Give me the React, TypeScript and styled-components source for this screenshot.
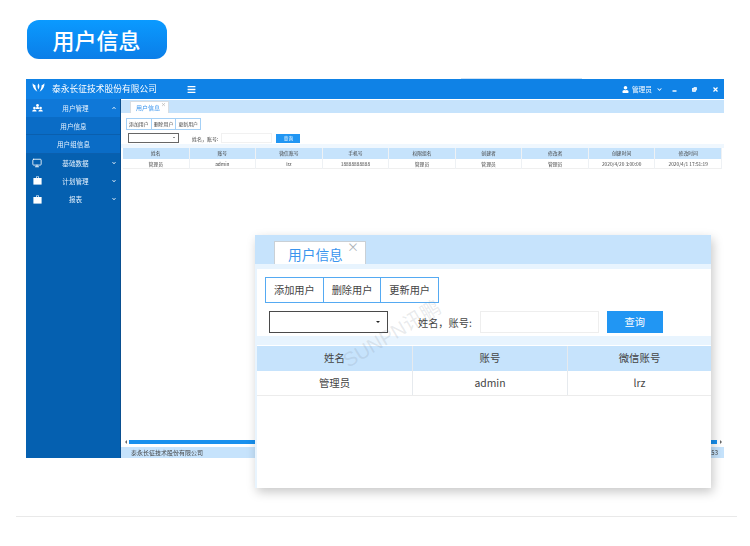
import React from "react";
import styled, { createGlobalStyle } from "styled-components";
import { FaBars, FaChevronDown, FaChevronUp, FaUser } from "react-icons/fa";
import { Monitor } from "lucide-react";

const GlobalStyle = createGlobalStyle`
  html, body {
    margin: 0;
    padding: 0;
    background: #fff;
    font-family: "Noto Sans CJK SC", "Noto Sans", sans-serif;
  }
  * {
    box-sizing: border-box;
  }
`;

const Page = styled.div`
  width: 750px;
  height: 546px;
  overflow: hidden;
  display: flex;
  flex-direction: column;
  padding-top: 20px;
`;

const SectionPill = styled.div`
  width: 140px;
  height: 39px;
  margin-left: 27px;
  border-radius: 12px;
  background: linear-gradient(180deg, #0a9aff 0%, #0b7ee8 100%);
  color: #fff;
  font-size: 22px;
  font-weight: 500;
  line-height: 38px;
  text-align: center;
  text-indent: -1px;
`;

const AppShot = styled.div`
  position: relative;
  width: 698px;
  height: 379px;
  margin: 20px 0 0 26px;
  display: flex;
  flex-direction: column;
`;

const Notch = styled.div`
  position: absolute;
  left: 435px;
  top: -1px;
  width: 121px;
  height: 1px;
  background: #cfe2f5;
`;

const TopBar = styled.header`
  height: 20px;
  flex: none;
  background: #0f82e6;
  color: #fff;
  display: flex;
  align-items: center;
  padding: 0 6px 0 5px;
  filter: blur(0.25px);
`;

const LogoBox = styled.div`
  width: 15px;
  display: flex;
  justify-content: center;
  margin-bottom: 3px;
`;

const AppTitle = styled.div`
  font-size: 8.75px;
  line-height: 20px;
  margin-left: 6px;
  width: 135px;
  white-space: nowrap;
`;

const UserArea = styled.div`
  margin-left: auto;
  display: flex;
  align-items: center;
  font-size: 6.7px;
`;

const UserName = styled.span`
  margin: 0 5px 0 3px;
`;

const WinButton = styled.div<{ $gap: number }>`
  margin-left: ${(p) => p.$gap}px;
  width: 6px;
  display: flex;
  justify-content: center;
`;

const Columns = styled.div`
  flex: 1;
  min-height: 0;
  display: flex;
  filter: blur(0.25px);
`;

const Sidebar = styled.nav`
  width: 95px;
  flex: none;
  background: #0560b0;
  border-right: 1px solid #0a4f90;
`;

const MenuItem = styled.div<{ $tone: "open" | "sub" | "closed" }>`
  height: 18.2px;
  display: grid;
  grid-template-columns: 22px 1fr 12px;
  align-items: center;
  color: #e4f1fd;
  font-size: 6.6px;
  background: ${(p) =>
    p.$tone === "open" ? "#0f78d8" : p.$tone === "sub" ? "#0a6cc6" : "transparent"};
  border-bottom: ${(p) => (p.$tone === "sub" ? "1px solid #0a5fae" : "none")};
`;

const MenuIcon = styled.div`
  display: flex;
  justify-content: center;
`;

const MenuText = styled.div<{ $sub: boolean }>`
  text-align: center;
  padding-right: ${(p) => (p.$sub ? 9 : 5)}px;
`;

const Main = styled.main`
  flex: 1;
  min-width: 0;
  display: flex;
  flex-direction: column;
  background: #fff;
  padding-top: 1px;
`;

const MiniTabStrip = styled.div`
  height: 13px;
  flex: none;
  background: #c6e3fc;
  padding: 1px 0 0 9px;
`;

const MiniTab = styled.div`
  position: relative;
  width: 39px;
  height: 12px;
  background: #fff;
  border: 1px solid #d8dde2;
  border-bottom: none;
  color: #3a95ee;
  font-size: 6px;
  line-height: 11px;
  padding-left: 5px;
`;

const MiniClose = styled.span`
  position: absolute;
  right: 2px;
  top: -1px;
  font-size: 5px;
  line-height: 6px;
  color: #999;
`;

const MiniButtons = styled.div`
  display: flex;
  width: 75px;
  height: 12px;
  margin: 5px 0 0 5px;
  border: 1px solid #a4d0f6;
`;

const MiniButton = styled.div`
  flex: 1;
  color: #444;
  font-size: 4.9px;
  line-height: 10px;
  text-align: center;
  & + & {
    border-left: 1px solid #a4d0f6;
  }
`;

const MiniFilter = styled.div`
  display: flex;
  align-items: center;
  height: 10px;
  margin: 3px 0 0 7px;
`;

const MiniSelect = styled.div`
  position: relative;
  width: 51px;
  height: 10px;
  border: 1px solid #666;
`;

const SelectArrow = styled.span<{ $size: number; $right: number }>`
  position: absolute;
  top: 50%;
  right: ${(p) => p.$right}px;
  margin-top: -${(p) => p.$size / 2}px;
  border-style: solid;
  border-width: ${(p) => p.$size}px ${(p) => p.$size}px 0;
  border-color: #222 transparent transparent;
`;

const MiniLabel = styled.div`
  margin-left: 13px;
  font-size: 5px;
  color: #444;
  white-space: nowrap;
`;

const MiniInput = styled.div`
  width: 51px;
  height: 10px;
  margin-left: 3px;
  border: 1px solid #f1f1f1;
`;

const MiniQuery = styled.div`
  width: 24px;
  height: 9px;
  margin-left: 4px;
  background: #2196f3;
  color: #fff;
  font-size: 4.6px;
  line-height: 9px;
  text-align: center;
`;

const MiniBand = styled.div`
  height: 4px;
  flex: none;
  margin-top: 1px;
  background: #eff7fe;
`;

const MiniTable = styled.div`
  margin: 0 2px;
  flex: none;
`;

const MiniRow = styled.div<{ $head?: boolean }>`
  display: grid;
  grid-template-columns: repeat(9, 1fr);
  height: ${(p) => (p.$head ? 11 : 10)}px;
  background: ${(p) => (p.$head ? "#c6e3fc" : "#fff")};
  border-bottom: ${(p) => (p.$head ? "none" : "1px solid #efefef")};
`;

const MiniCell = styled.div`
  font-size: 4.8px;
  line-height: 10px;
  color: #444;
  text-align: center;
  white-space: nowrap;
  border-right: 1px solid #eef1f4;
`;

const Scrollbar = styled.div`
  margin-top: auto;
  height: 6px;
  flex: none;
  display: flex;
  align-items: center;
  padding: 0 2px 0 4px;
`;

const ScrollThumb = styled.div`
  flex: 1;
  height: 4px;
  margin: 0 3px 0 2px;
  background: #1890ee;
`;

const ScrollArrow = styled.span<{ $right?: boolean }>`
  border-style: solid;
  border-width: 2px 0 2px 2px;
  border-color: transparent transparent transparent #666;
  transform: ${(p) => (p.$right ? "none" : "rotate(180deg)")};
`;

const StatusBar = styled.footer`
  height: 11px;
  flex: none;
  margin-top: 2px;
  background: #c6e3fc;
  color: #444;
  font-size: 6px;
  line-height: 11px;
  display: flex;
  justify-content: space-between;
  padding: 0 6px 0 10px;
`;

const ZoomCard = styled.section`
  position: absolute;
  left: 229px;
  top: 156px;
  width: 456px;
  height: 253px;
  background: #fff;
  border-left: 2px solid #e8f4fe;
  box-shadow: 2px 4px 10px rgba(0, 0, 0, 0.22);
  display: flex;
  flex-direction: column;
`;

const ZoomTabStrip = styled.div`
  height: 29px;
  flex: none;
  margin-left: -2px;
  background: #c6e3fc;
  padding: 6px 0 0 19px;
`;

const ZoomTab = styled.div`
  position: relative;
  width: 92px;
  height: 23px;
  background: #fff;
  border: 1px solid #c9d0d6;
  border-bottom: none;
  color: #3a95ee;
  font-size: 13.7px;
  line-height: 24px;
  padding-left: 13px;
`;

const ZoomClose = styled.span`
  position: absolute;
  right: 6px;
  top: -2px;
  font-size: 12px;
  line-height: 14px;
  color: #aab1b8;
`;

const ZoomBand = styled.div<{ $h: number }>`
  height: ${(p) => p.$h}px;
  flex: none;
  background: #e8f4fe;
`;

const ZoomButtons = styled.div`
  display: flex;
  width: 174px;
  height: 26px;
  margin: 8px 0 0 8px;
  border: 1.5px solid #55aaf2;
`;

const ZoomButton = styled.div`
  flex: 1;
  color: #444;
  font-size: 10.2px;
  line-height: 23px;
  text-align: center;
  & + & {
    border-left: 1.5px solid #55aaf2;
  }
`;

const ZoomFilter = styled.div`
  display: flex;
  align-items: center;
  height: 22px;
  margin: 8px 0 3px 12px;
`;

const ZoomSelect = styled.div`
  position: relative;
  width: 119px;
  height: 22px;
  border: 1.5px solid #4a4a4a;
`;

const ZoomLabel = styled.div`
  margin-left: 30px;
  font-size: 10.2px;
  color: #444;
  white-space: nowrap;
`;

const ZoomInput = styled.div`
  width: 119px;
  height: 22px;
  margin-left: 8px;
  border: 1px solid #eee;
`;

const ZoomQuery = styled.div`
  width: 56px;
  height: 22px;
  margin-left: 8px;
  background: #2196f3;
  color: #fff;
  font-size: 10.2px;
  line-height: 22px;
  text-align: center;
`;

const ZoomRow = styled.div<{ $head?: boolean }>`
  display: grid;
  grid-template-columns: 155px 155px 1fr;
  height: 25px;
  margin-top: ${(p) => (p.$head ? 1 : 0)}px;
  background: ${(p) => (p.$head ? "#c6e3fc" : "#fff")};
  border-bottom: ${(p) => (p.$head ? "none" : "1px solid #ececec")};
`;

const ZoomCell = styled.div`
  font-size: 10.4px;
  line-height: 24px;
  color: #444;
  text-align: center;
  & + & {
    border-left: 1px solid #e6eaee;
  }
`;

const Watermark = styled.div`
  position: absolute;
  left: 79px;
  top: 83px;
  font-family: "Liberation Sans", "Noto Sans CJK SC", sans-serif;
  font-size: 20px;
  color: rgba(120, 130, 140, 0.17);
  transform: rotate(-31deg);
  white-space: nowrap;
  pointer-events: none;
`;

const Divider = styled.div`
  height: 1px;
  margin: 58px 13px 0 16px;
  background: #e9e9e9;
`;

const Logo = () => (
  <svg width="13" height="9" viewBox="0 0 13 9" fill="#fff">
    <path d="M0.6 0.3C0.2 3.4 1.8 6.6 5.4 8.8C4.4 6.8 3.2 4.4 3.4 2.2C2.4 2 1.4 1.2 0.6 0.3Z" />
    <path d="M12.4 0.3C12.8 3.4 11.2 6.6 7.6 8.8C8.6 6.8 9.8 4.4 9.6 2.2C10.6 2 11.6 1.2 12.4 0.3Z" />
    <path d="M6.5 0.6C7.6 2 7.8 4.4 6.5 6.4C5.2 4.4 5.4 2 6.5 0.6Z" />
  </svg>
);

const PeopleIcon = () => (
  <svg width="11" height="8" viewBox="0 0 11 8" fill="#fff">
    <circle cx="5.5" cy="1.5" r="1.4" />
    <path d="M3.6 5C3.6 3.6 4.4 3 5.5 3S7.4 3.6 7.4 5Z" />
    <circle cx="2.4" cy="4" r="1.3" />
    <path d="M0.2 7.6C0.2 6.2 1.2 5.4 2.4 5.4S4.6 6.2 4.6 7.6Z" />
    <circle cx="8.6" cy="4" r="1.3" />
    <path d="M6.4 7.6C6.4 6.2 7.4 5.4 8.6 5.4S10.8 6.2 10.8 7.6Z" />
  </svg>
);

const CaseIcon = () => (
  <svg width="9" height="9" viewBox="0 0 9 9" fill="#fff">
    <path d="M3 0.4H6V2H5.3V1.1H3.7V2H3Z" />
    <rect x="0.4" y="2" width="8.2" height="6.6" />
  </svg>
);

const RestoreIcon = () => (
  <svg width="5" height="5" viewBox="0 0 6 6" fill="none" stroke="#fff" strokeWidth="1">
    <rect x="0.7" y="1.8" width="3.4" height="3.4" fill="#cfe6fb" />
    <path d="M2 0.6H5.4V4" />
  </svg>
);

const CloseIcon = () => (
  <svg width="5" height="5" viewBox="0 0 5 5" stroke="#fff" strokeWidth="1.2">
    <path d="M0.5 0.5L4.5 4.5M4.5 0.5L0.5 4.5" />
  </svg>
);

const MinIcon = () => (
  <svg width="5" height="5" viewBox="0 0 5 5" stroke="#fff" strokeWidth="1.4">
    <path d="M0.5 4H4.5" />
  </svg>
);

const menu: { label: string; tone: "open" | "sub" | "closed"; icon?: React.ReactNode; arrow?: "up" | "down" }[] = [
  { label: "用户管理", tone: "open", icon: <PeopleIcon />, arrow: "up" },
  { label: "用户信息", tone: "sub" },
  { label: "用户组信息", tone: "sub" },
  { label: "基础数据", tone: "closed", icon: <Monitor size={10} color="#fff" strokeWidth={2} />, arrow: "down" },
  { label: "计划管理", tone: "closed", icon: <CaseIcon />, arrow: "down" },
  { label: "报表", tone: "closed", icon: <CaseIcon />, arrow: "down" },
];

const actions = ["添加用户", "删除用户", "更新用户"];

const miniHead = ["姓名", "账号", "微信账号", "手机号", "权限组名", "创建者", "修改者", "创建时间", "修改时间"];
const miniData = ["管理员", "admin", "lrz", "18888888888", "管理员", "管理员", "管理员", "2020/4/20 3:00:00", "2020/4/1 17:51:19"];

const App: React.FC = () => {
  return (
    <Page>
      <GlobalStyle />
      <SectionPill>用户信息</SectionPill>

      <AppShot>
        <Notch />
        <TopBar>
          <LogoBox>
            <Logo />
          </LogoBox>
          <AppTitle>泰永长征技术股份有限公司</AppTitle>
          <FaBars size={9} />
          <UserArea>
            <FaUser size={7} />
            <UserName>管理员</UserName>
            <FaChevronDown size={5} />
            <WinButton $gap={9}>
              <MinIcon />
            </WinButton>
            <WinButton $gap={14}>
              <RestoreIcon />
            </WinButton>
            <WinButton $gap={15}>
              <CloseIcon />
            </WinButton>
          </UserArea>
        </TopBar>

        <Columns>
          <Sidebar>
            {menu.map((m) => (
              <MenuItem key={m.label} $tone={m.tone}>
                <MenuIcon>{m.icon}</MenuIcon>
                <MenuText $sub={m.tone === "sub"}>{m.label}</MenuText>
                <MenuIcon>
                  {m.arrow === "up" && <FaChevronUp size={4} color="#fff" />}
                  {m.arrow === "down" && <FaChevronDown size={4} color="#fff" />}
                </MenuIcon>
              </MenuItem>
            ))}
          </Sidebar>

          <Main>
            <MiniTabStrip>
              <MiniTab>
                用户信息
                <MiniClose>×</MiniClose>
              </MiniTab>
            </MiniTabStrip>
            <MiniButtons>
              {actions.map((a) => (
                <MiniButton key={a}>{a}</MiniButton>
              ))}
            </MiniButtons>
            <MiniFilter>
              <MiniSelect>
                <SelectArrow $size={1.2} $right={3} />
              </MiniSelect>
              <MiniLabel>姓名，账号:</MiniLabel>
              <MiniInput />
              <MiniQuery>查询</MiniQuery>
            </MiniFilter>
            <MiniBand />
            <MiniTable>
              <MiniRow $head>
                {miniHead.map((h) => (
                  <MiniCell key={h}>{h}</MiniCell>
                ))}
              </MiniRow>
              <MiniRow>
                {miniData.map((d, i) => (
                  <MiniCell key={i}>{d}</MiniCell>
                ))}
              </MiniRow>
            </MiniTable>
            <Scrollbar>
              <ScrollArrow />
              <ScrollThumb />
              <ScrollArrow $right />
            </Scrollbar>
            <StatusBar>
              <span>泰永长征技术股份有限公司</span>
              <span>53</span>
            </StatusBar>
          </Main>
        </Columns>

        <ZoomCard>
          <ZoomTabStrip>
            <ZoomTab>
              用户信息
              <ZoomClose>×</ZoomClose>
            </ZoomTab>
          </ZoomTabStrip>
          <ZoomBand $h={5} />
          <ZoomButtons>
            {actions.map((a) => (
              <ZoomButton key={a}>{a}</ZoomButton>
            ))}
          </ZoomButtons>
          <ZoomFilter>
            <ZoomSelect>
              <SelectArrow $size={2.2} $right={7} />
            </ZoomSelect>
            <ZoomLabel>姓名，账号:</ZoomLabel>
            <ZoomInput />
            <ZoomQuery>查询</ZoomQuery>
          </ZoomFilter>
          <ZoomBand $h={9} />
          <ZoomRow $head>
            <ZoomCell>姓名</ZoomCell>
            <ZoomCell>账号</ZoomCell>
            <ZoomCell>微信账号</ZoomCell>
          </ZoomRow>
          <ZoomRow>
            <ZoomCell>管理员</ZoomCell>
            <ZoomCell>admin</ZoomCell>
            <ZoomCell>lrz</ZoomCell>
          </ZoomRow>
          <Watermark>SUNPN讯鹏</Watermark>
        </ZoomCard>
      </AppShot>

      <Divider />
    </Page>
  );
};

export default App;
